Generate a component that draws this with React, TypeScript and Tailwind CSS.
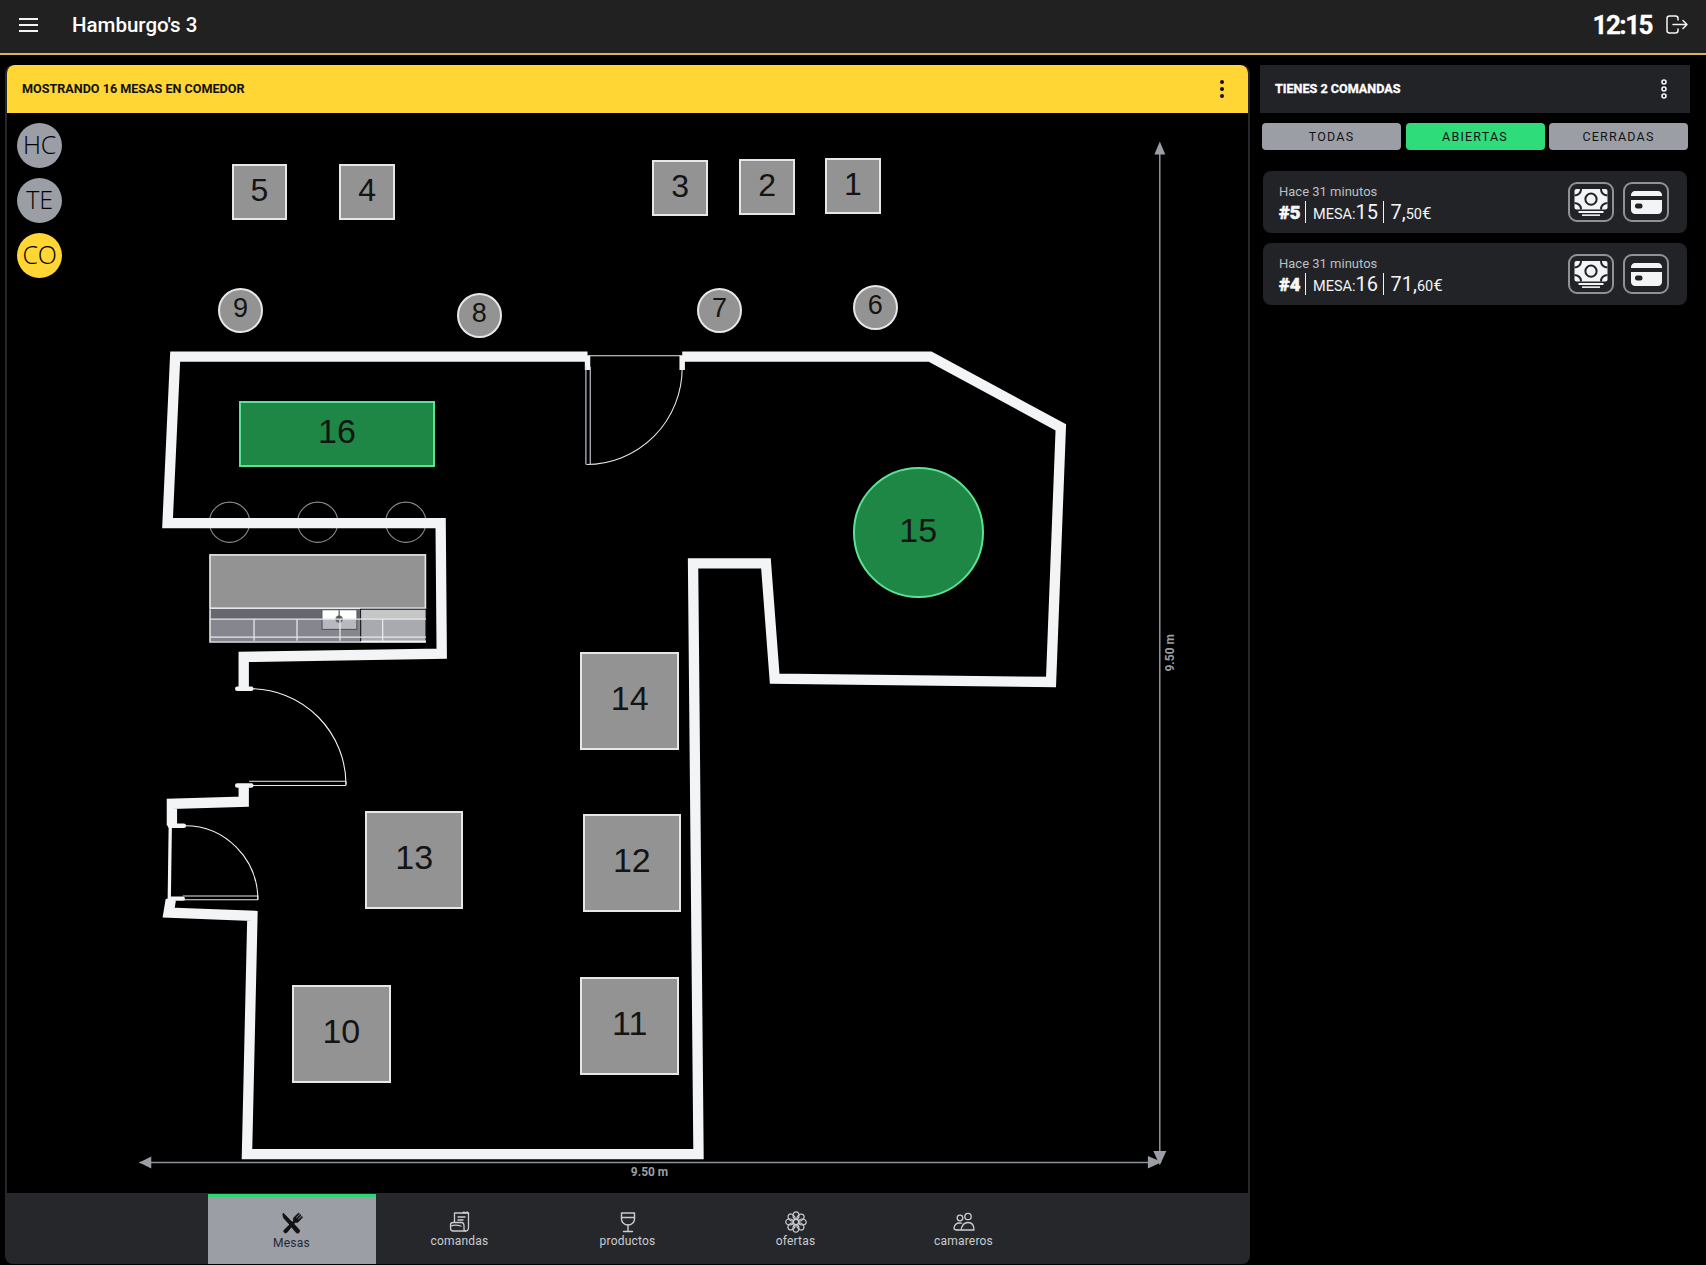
import React from "react";

const K = 1706 / 1568;
const OX = 7;
const OY = 113;

type Table = { n: string; x1: number; y1: number; x2: number; y2: number; round?: boolean; busy?: boolean; size: number };

const tables: Table[] = [
  { n: "5", x1: 213, y1: 151, x2: 264, y2: 202, size: 32 },
  { n: "4", x1: 312, y1: 151, x2: 363, y2: 202, size: 32 },
  { n: "3", x1: 599.5, y1: 147, x2: 651, y2: 198.5, size: 32 },
  { n: "2", x1: 679.5, y1: 146, x2: 730.5, y2: 197.5, size: 32 },
  { n: "1", x1: 758.5, y1: 145, x2: 809.5, y2: 196.5, size: 32 },
  { n: "9", x1: 200.5, y1: 264.5, x2: 241.5, y2: 306, round: true, size: 27 },
  { n: "8", x1: 420, y1: 269.5, x2: 461, y2: 311, round: true, size: 27 },
  { n: "7", x1: 640.5, y1: 264.5, x2: 682, y2: 306, round: true, size: 27 },
  { n: "6", x1: 784, y1: 261.5, x2: 825, y2: 303, round: true, size: 27 },
  { n: "16", x1: 220, y1: 368.5, x2: 399.5, y2: 429.5, busy: true, size: 34 },
  { n: "15", x1: 784, y1: 429.5, x2: 904, y2: 549.5, round: true, busy: true, size: 34 },
  { n: "14", x1: 533.5, y1: 599.5, x2: 624, y2: 689.5, size: 34 },
  { n: "13", x1: 335.5, y1: 745.5, x2: 426, y2: 835.5, size: 34 },
  { n: "12", x1: 535.5, y1: 748.5, x2: 626, y2: 838.5, size: 34 },
  { n: "11", x1: 533.5, y1: 898, x2: 624, y2: 988, size: 34 },
  { n: "10", x1: 268.5, y1: 905.5, x2: 359, y2: 995.5, size: 34 },
];

function FloorPlan() {
  const wall = "#f3f4f6";
  return (
    <svg
      className="absolute inset-0 h-full w-full"
      viewBox={`${OX / K} ${OY / K} ${1241 / K} ${1080 / K}`}
      fill="none"
    >
      {/* stools */}
      {[211, 292, 373].map((x) => (
        <circle key={x} cx={x} cy={480} r={18.5} stroke="#8a8a8a" strokeWidth={1} />
      ))}
      <g transform="translate(0 0.8)">
        {/* walls */}
        <path
          d="M540 327 H161 L154 480 H405 L406 600 L224 603 V632"
          stroke={wall}
          strokeWidth={9.5}
          strokeLinejoin="miter"
        />
        <path
          d="M627 327 H855 L975 392 L966 626 L712 623 L704 517 H637 L642 1060 H227 L232 841 L155 838 L157 826"
          stroke={wall}
          strokeWidth={9.5}
          strokeLinejoin="miter"
        />
        <path d="M224 722 V736 L158 738 V758" stroke={wall} strokeWidth={9.5} strokeLinejoin="miter" />
      </g>
      {/* top door */}
      <path d="M540 327 H627" stroke="#e5e7eb" strokeWidth={1} />
      <path d="M540 327 V340 M627 327 V340" stroke={wall} strokeWidth={5} />
      <path d="M627 338 A 88 89 0 0 1 539 427" stroke="#e5e7eb" strokeWidth={1} />
      <path d="M538.5 337 V427 M542.5 337 V427" stroke="#d1d5db" strokeWidth={1} />
      {/* entrance door */}
      <path d="M218 633 H231 M218 722 H231" stroke={wall} strokeWidth={4} strokeLinecap="round" />
      <path d="M230 633 A 88 88 0 0 1 318 721" stroke="#f3f4f6" strokeWidth={1} />
      <path d="M229 718 H318 M229 722 H318 M318 718 V722" stroke="#e5e7eb" strokeWidth={1} />
      {/* side door */}
      <path d="M156 759 H169 M156 826 H168" stroke={wall} strokeWidth={4} strokeLinecap="round" />
      <path d="M170 759 A 67 68 0 0 1 237 827" stroke="#f3f4f6" strokeWidth={1} />
      <path d="M168 823.5 H237 M168 827 H237 M237 823 V827" stroke="#e5e7eb" strokeWidth={1} />
      <path d="M156.5 759 L155.5 832" stroke={wall} strokeWidth={3} />
      {/* counter */}
      <rect x={193} y={510} width={198} height={49} fill="#939393" stroke="#e5e7eb" strokeWidth={1.5} />
      <rect x={193} y={560} width={139} height={29.5} fill="#85868e" />
      <rect x={193.5} y={560} width={138} height={9} fill="#67676f" />
      <rect x={331.5} y={560} width={60} height={29.5} fill="#a9aaaf" stroke="#111" strokeWidth={1} />
      <rect x={332} y={560.5} width={59} height={8.5} fill="#c6c6c6" />
      <rect x={296} y={560.5} width={32} height={18} fill="#b8b9bf" stroke="#55555c" strokeWidth={1} />
      <rect x={296.5} y={561} width={31} height={8} fill="#ffffff" />
      <circle cx={311.7} cy={569} r={3.4} fill="#66666c" />
      <path d="M311.7 561 V569" stroke="#444" strokeWidth={1} />
      <path
        d="M193 569 H391.5 M193 585.5 H391.5 M233.5 569 V589 M273 569 V589 M312.5 569 V589 M351.7 569 V589"
        stroke="#e5e7eb"
        strokeWidth={1.2}
      />
      <path d="M193 560 V590 H391.5" stroke="#e5e7eb" strokeWidth={1.4} />
      <path d="M332 589.5 H391.5" stroke="#f3f4f6" strokeWidth={1.6} />
      {/* dimensions */}
      <path d="M128 1068.5 H1058" stroke="#8d9098" strokeWidth={1.4} />
      <path d="M1066 140 V1060" stroke="#a6a9ae" strokeWidth={1.2} />
      <path d="M128 1068.5 L139 1063 V1074 Z" fill="#9b9ea5" />
      <path d="M1055 1062.5 L1068 1068 L1055 1074 Z" fill="#9b9ea5" />
      <path d="M1066 130 L1071 142 H1061 Z" fill="#9b9ea5" />
      <path d="M1060 1058 H1072 L1066 1071 Z" fill="#9b9ea5" />
      <text
        x={597}
        y={1081}
        textAnchor="middle"
        fill="#9b9ea5"
        fontSize={11}
        fontWeight={700}
        fontFamily="Roboto, sans-serif"
      >
        9.50 m
      </text>
      <text
        x={0}
        y={0}
        transform="translate(1079 600) rotate(-90)"
        textAnchor="middle"
        fill="#9b9ea5"
        fontSize={11}
        fontWeight={700}
        fontFamily="Roboto, sans-serif"
      >
        9.50 m
      </text>
    </svg>
  );
}

function TableNode({ t }: { t: Table }) {
  const style = {
    left: t.x1 * K - OX,
    top: t.y1 * K - OY,
    width: (t.x2 - t.x1) * K,
    height: (t.y2 - t.y1) * K,
    fontSize: t.size,
  };
  const base =
    "absolute flex items-center justify-center border-[2.5px] font-['Liberation_Sans',sans-serif] leading-none text-[#141414]";
  const color = t.busy ? "bg-[#1e8746] border-[#5be395]" : "bg-[#939393] border-[#e5e7eb]";
  const lift = t.size === 34 ? "pb-[6px]" : "pb-[4px]";
  return (
    <div className={`${base} ${color} ${lift} ${t.round ? "rounded-full" : ""}`} style={style}>
      {t.n}
    </div>
  );
}

function Dots({ light }: { light?: boolean }) {
  return (
    <svg width="6" height="20" viewBox="0 0 6 20">
      {light ? (
        <g fill="#212327" stroke="#f3f4f6" strokeWidth="1.6">
          <circle cx="3" cy="3" r="2" />
          <circle cx="3" cy="10" r="2" />
          <circle cx="3" cy="17" r="2" />
        </g>
      ) : (
        <g fill="#111">
          <circle cx="3" cy="3" r="2" />
          <circle cx="3" cy="10" r="2" />
          <circle cx="3" cy="17" r="2" />
        </g>
      )}
    </svg>
  );
}

function MesasIcon() {
  return (
    <svg width="24" height="24" viewBox="0 0 24 24" fill="#111" stroke="#111" strokeWidth="0.7" strokeLinejoin="round">
      <path d="M3.2 2 L13 12 L19 18.4 C20.2 19.8 19.6 21.4 18.4 22 C17.4 22.4 16.4 22 15.8 21.2 L8.6 12.4 L4 7.4 C2.8 5.6 2.6 3.6 3.2 2 Z" />
      <path d="M4.6 18.6 L13.6 9.8 C13 8.2 13.4 7 14.4 6 L18.6 2 L19.4 2.8 L16 6.4 L16.8 7.2 L20.2 3.6 L21 4.4 L17.6 8 L18.4 8.8 L22 5.4 L22.6 6.2 L18.8 10.4 C17.8 11.4 16.4 11.6 15.2 11.2 L7.2 21.2 C6.4 22.2 4.8 22.2 4 21.2 C3.4 20.4 3.8 19.4 4.6 18.6 Z" />
    </svg>
  );
}

function ComandasIcon() {
  return (
    <svg width="24" height="24" viewBox="0 0 24 24" fill="none" stroke="#c9ccd1" strokeWidth="1.3" strokeLinejoin="round" strokeLinecap="round">
      <path d="M6.5 12 V3 H20.5 V17.5 C20.5 20 19.5 21 17.5 21" />
      <path d="M20.5 3 L19 2 L17.5 3 L16 2 L14.5 3" />
      <path d="M10 7 H17 M10 10 H15" />
      <path d="M5 12.5 H13.5 C15.2 12.5 16 14 16 16 V18.5 C16 20 16.6 21 17.5 21 H5 C3.5 21 2.5 20 2.5 18 V15 C2.5 13.5 3.5 12.5 5 12.5 Z" />
      <path d="M3 16 C6 14.8 9 14.8 13 16" />
    </svg>
  );
}

function ProductosIcon() {
  return (
    <svg width="24" height="24" viewBox="0 0 24 24" fill="none" stroke="#c9ccd1" strokeWidth="1.4" strokeLinejoin="round" strokeLinecap="round">
      <path d="M5.5 3 H18.5 V9 C18.5 12.5 15.5 15 12 15 C8.5 15 5.5 12.5 5.5 9 Z" />
      <path d="M5.5 7.5 H18.5" />
      <path d="M12 15 V21.5 M7.5 21.5 H16.5" />
    </svg>
  );
}

function OfertasIcon() {
  const petals = [0, 45, 90, 135, 180, 225, 270, 315];
  return (
    <svg width="24" height="24" viewBox="0 0 24 24" fill="none" stroke="#c9ccd1" strokeWidth="1.2">
      {petals.map((a) => (
        <ellipse key={a} cx="12" cy="5.6" rx="3" ry="3.8" transform={`rotate(${a} 12 12)`} />
      ))}
      <circle cx="12" cy="12" r="2.6" fill="#25272b" />
    </svg>
  );
}

function CamarerosIcon() {
  return (
    <svg width="24" height="24" viewBox="0 0 24 24" fill="none" stroke="#c9ccd1" strokeWidth="1.3" strokeLinejoin="round" strokeLinecap="round">
      <circle cx="8" cy="8" r="2.8" />
      <circle cx="16" cy="6.5" r="3.2" />
      <path d="M9 20 H22 C22 15.5 20 12.5 16 12.5 C12.5 12.5 9.8 15.5 9 20 Z M9 20 H5" />
      <path d="M9.5 13.2 C8.8 13 8.2 13 7.6 13 C4.6 13 2.4 15.2 2 18 C2 19.4 3.2 20 5 20" />
    </svg>
  );
}

function MoneyIcon() {
  return (
    <svg width="34" height="27" viewBox="0 0 34 27">
      <rect x="0.5" y="0" width="33" height="20.5" rx="2" fill="#f3f4f6" />
      <g fill="none" stroke="#212327" strokeWidth="2">
        <path d="M7 0 C7 3.5 5 6 0.5 6.5" />
        <path d="M27 0 C27 3.5 29 6 33.5 6.5" />
        <path d="M7 20.5 C7 17 5 14.5 0.5 14" />
        <path d="M27 20.5 C27 17 29 14.5 33.5 14" />
      </g>
      <circle cx="17" cy="10.2" r="5.6" fill="#f3f4f6" stroke="#212327" strokeWidth="2" />
      <rect x="4.5" y="22" width="25" height="2" fill="#f3f4f6" />
      <rect x="8" y="25.3" width="18" height="1.7" fill="#e5e7eb" />
    </svg>
  );
}

function CardIcon() {
  return (
    <svg width="31" height="23" viewBox="0 0 31 23">
      <path d="M0 4 C0 1.8 1.8 0 4 0 H27 C29.2 0 31 1.8 31 4 V5 H0 Z" fill="#f3f4f6" />
      <path d="M0 9 H31 V19 C31 21.2 29.2 23 27 23 H4 C1.8 23 0 21.2 0 19 Z" fill="#f3f4f6" />
      <rect x="4" y="12.5" width="7.5" height="5" rx="2.2" fill="#212327" />
    </svg>
  );
}

function Order({ num, mesa, euros, cents }: { num: string; mesa: string; euros: string; cents: string }) {
  return (
    <div className="flex h-[62px] items-center justify-between rounded-lg bg-[#212327] pl-[16px] pr-[18px]">
      <div className="pt-[2px]">
        <div className="text-[13px] leading-[16px] text-[#bcbfc4]">Hace 31 minutos</div>
        <div className="mt-px flex h-[22px] items-baseline text-[#f3f4f6]">
          <span className="w-[26px] text-[18.5px] font-black leading-[22px] [-webkit-text-stroke:0.5px_#fff]">{num}</span>
          <span className="h-[22px] w-px self-center bg-[#f3f4f6]" />
          <span className="ml-[7px] text-[14.5px] leading-[22px]">MESA:</span>
          <span className="text-[20px] leading-[22px]">{mesa}</span>
          <span className="ml-[5.5px] h-[22px] w-px self-center bg-[#f3f4f6]" />
          <span className="ml-[6px] text-[20px] leading-[22px]">{euros},</span>
          <span className="text-[14.5px] leading-[22px]">{cents}</span>
          <span className="text-[17px] leading-[22px]">€</span>
        </div>
      </div>
      <div className="flex gap-[9px]">
        <div className="flex h-[40px] w-[46px] items-center justify-center rounded-[9px] border-2 border-[#8f9195]">
          <MoneyIcon />
        </div>
        <div className="flex h-[40px] w-[46px] items-center justify-center rounded-[9px] border-2 border-[#8f9195]">
          <CardIcon />
        </div>
      </div>
    </div>
  );
}

function Tab({ label, active, icon }: { label: string; active?: boolean; icon: React.ReactNode }) {
  return (
    <div
      className={
        active
          ? "flex h-[70px] w-[168px] flex-col items-center border-t-[3px] border-[#2ed573] bg-[#9b9ea5] pt-[14px] text-[#1f2937]"
          : "flex h-[70px] w-[168px] flex-col items-center pt-[16px] text-[#c9ccd1]"
      }
    >
      {icon}
      <span className={active ? "text-[12px] leading-[16px] tracking-[0.2px]" : "-mt-px text-[12px] leading-[16px] tracking-[0.2px]"}>
        {label}
      </span>
    </div>
  );
}

function ZoneButton({ label, active }: { label: string; active?: boolean }) {
  return (
    <div
      className={`flex h-[45px] w-[45px] items-center justify-center rounded-full pb-[2px] font-['Open_Sans',sans-serif] text-[25px] font-light leading-none tracking-[-0.3px] text-black ${
        active ? "bg-[#ffd633]" : "bg-[#9b9ea5]"
      }`}
    >
      {label}
    </div>
  );
}

export default function App() {
  return (
    <div className="flex h-[1265px] w-[1706px] flex-col overflow-hidden bg-black font-['Roboto',sans-serif]">
      <header className="flex h-[55px] shrink-0 items-center border-b-2 border-[#d9b84f] bg-[#212121] pb-[3px] text-white">
        <svg className="ml-[19px]" width="19" height="16" viewBox="0 0 19 16" stroke="#f3f4f6" strokeWidth="2">
          <path d="M0 2 H19 M0 8 H19 M0 14 H19" />
        </svg>
        <span className="ml-[34px] text-[20.5px] font-medium leading-none">Hamburgo&apos;s 3</span>
        <span className="ml-auto text-[26px] font-bold leading-none tracking-[-1.5px] [-webkit-text-stroke:0.3px_#fff]">12:15</span>
        <svg className="ml-[14px] mr-[18px]" width="22" height="20" viewBox="0 0 22 20" fill="none" stroke="#f3f4f6" strokeWidth="1.5" strokeLinecap="round" strokeLinejoin="round">
          <path d="M12 5 V3.5 C12 2 11 1 9.5 1 H3.5 C2 1 1 2 1 3.5 V15.5 C1 17 2 18 3.5 18 H9.5 C11 18 12 17 12 15.5 V14" />
          <path d="M7 9.5 H21 M17 5.5 L21 9.5 L17 13.5" />
        </svg>
      </header>
      <div className="flex flex-1 pt-[10px]">
        <main className="ml-[5px] flex h-[1199px] w-[1245px] flex-col overflow-hidden rounded-lg border-x-2 border-[#25272b] bg-[#25272b]">
          <div className="flex h-[48px] shrink-0 items-center justify-between rounded-t-lg bg-[#ffd633] pl-[15px] pr-[23px]">
            <span className="text-[12.6px] font-bold uppercase leading-none text-[#111]">Mostrando 16 mesas en comedor</span>
            <Dots />
          </div>
          <div className="relative h-[1080px] shrink-0 bg-black">
            <FloorPlan />
            {tables.map((t) => (
              <TableNode key={t.n} t={t} />
            ))}
            <div className="absolute left-[10px] top-[10px] flex flex-col gap-[10px]">
              <ZoneButton label="HC" />
              <ZoneButton label="TE" />
              <ZoneButton label="CO" active />
            </div>
          </div>
          <nav className="flex h-[71px] shrink-0 justify-center pt-px">
            <Tab label="Mesas" active icon={<MesasIcon />} />
            <Tab label="comandas" icon={<ComandasIcon />} />
            <Tab label="productos" icon={<ProductosIcon />} />
            <Tab label="ofertas" icon={<OfertasIcon />} />
            <Tab label="camareros" icon={<CamarerosIcon />} />
          </nav>
        </main>
        <aside className="ml-[10px] w-[430px]">
          <div className="flex h-[48px] items-center justify-between bg-[#212327] pl-[15px] pr-[23px]">
            <span className="text-[12.6px] font-bold uppercase leading-none text-white [-webkit-text-stroke:0.3px_#fff]">Tienes 2 comandas</span>
            <Dots light />
          </div>
          <div className="mt-[10px] flex justify-between px-[2px]">
            {["TODAS", "ABIERTAS", "CERRADAS"].map((l) => (
              <div
                key={l}
                className={`flex h-[27px] w-[139px] items-center justify-center rounded pt-px text-[12.5px] font-normal leading-none tracking-[1.2px] text-[#111317] ${
                  l === "ABIERTAS" ? "bg-[#2fdc7a]" : "bg-[#9b9ea5]"
                }`}
              >
                {l}
              </div>
            ))}
          </div>
          <div className="ml-[3px] mt-[21px] flex w-[424px] flex-col gap-[10px]">
            <Order num="#5" mesa="15" euros="7" cents="50" />
            <Order num="#4" mesa="16" euros="71" cents="60" />
          </div>
        </aside>
      </div>
    </div>
  );
}
